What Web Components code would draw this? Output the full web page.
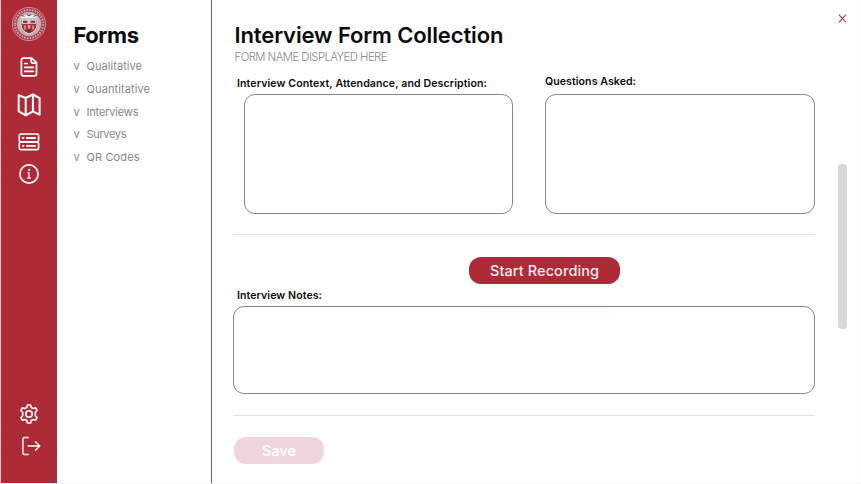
<!DOCTYPE html>
<html lang="en"><head><meta charset="utf-8"><title>Interview Form Collection</title>
<style>
html,body{margin:0;background:#fff}
body{width:861px;height:484px;overflow:hidden;font-family:Inter,"Liberation Sans",sans-serif;color:#0b0b0c}
</style></head><body>
<form-app></form-app>
<script>
const define=(name,html,setup)=>customElements.define(name,class extends HTMLElement{
  constructor(){super();this.attachShadow({mode:'open'}).innerHTML=html;}
  connectedCallback(){if(setup)setup(this,this.shadowRoot);}
});

/* Single line of text, tracked so that it spans the given measure */
define('fit-text',`<style>:host{display:block;white-space:pre;line-height:inherit}span{display:inline-block}</style><span></span>`,(el,root)=>{
  const s=root.querySelector('span'),t=el.getAttribute('text'),w=+el.getAttribute('measure');
  s.textContent=t;
  const natural=s.getBoundingClientRect().width;
  s.style.letterSpacing=((w-natural)/(t.length-1))+'px';
  s.style.marginRight=(-(w-natural)/(t.length-1))+'px';
});

const icons={
seal:`<svg width="36" height="36" viewBox="0 0 36 36"><defs><path id="r" d="M18 18m-13.2 0a13.2 13.2 0 1 1 26.4 0a13.2 13.2 0 1 1 -26.4 0"/></defs>
<circle cx="18" cy="18" r="16.6" fill="#b23a47" stroke="#b9969d" stroke-width="1"/>
<use href="#r" transform="translate(-1.260 -1.260) scale(1.070)" fill="none" stroke="#d6a0a7" stroke-width="2" stroke-dasharray="1.4 1.2"/>
<circle cx="18" cy="18" r="11.8" fill="#b5b3b8" stroke="#cfc5c9" stroke-width=".7"/>
<path d="M9.500 11q3.500-3.200 8.500-1 5-2.200 8.500 1l-2.500 1.300q-3-1.300-6 .2-3-1.500-6-.2z" fill="#f2f2f2"/>
<path d="M10.500 9.500l3 .8M16 8.500l2 1.500 2-1.500M22.500 10.300l3-.8" stroke="#4c4347" stroke-width="1" fill="none"/>
<path d="M10 13.300h16v5.200q-.2 6.800-8 9.500-7.800-2.700-8-9.500z" fill="#b52b39" stroke="#f0e5e7" stroke-width=".9"/>
<path d="M10.900 13.800h14.200v4H10.900z" fill="#ded5d8"/><path d="M12 15.700h4.500M19.500 15.700H24" stroke="#493c40" stroke-width="2"/>
<path d="M14 19.500v4M22 19.500v4M16.500 20h3M18 20v3" stroke="#f0dfe2" stroke-width="1"/><path d="M16 23.300h4l-.6 3.200h-2.800z" fill="#49383d"/></svg>`,
doc:`<svg width="20" height="20" viewBox="0 0 20 20" fill="none" stroke="#fff" stroke-width="1.700" stroke-linejoin="round" stroke-linecap="round"><path d="M4.500 1.200h8.300l4.700 4.500v11q0 2.100-2.100 2.100H4.500q-2.100 0-2.100-2.100V3.300q0-2.100 2.100-2.100z"/><path d="M12.200 1.500v3.200q0 1.500 1.500 1.500h3.500M5.700 6.500h2.600M5.700 10.300h8.600M5.700 14.300h8.600"/></svg>`,
map:`<svg width="24" height="24" viewBox="0 0 24 24" fill="none" stroke="#fff" stroke-width="2" stroke-linejoin="round"><path d="M1.700 2.200L8.700 5l7.200-3.500 6.700 3.700v16.500l-6.700-3.400-7.200 4-7-4zM8.700 5v17.300M15.900 1.500v16.800"/></svg>`,
server:`<svg width="22" height="18" viewBox="0 0 22 18" fill="none" stroke="#fff" stroke-width="1.600"><rect x="1.300" y="1" width="19.300" height="7.900" rx="1.500"/><rect x="1.300" y="8.900" width="19.300" height="7.700" rx="1.500"/><path d="M4.200 5h2M8.200 5h9.500M4.200 12.800h2M8.200 12.800h9.500" stroke-width="1.800"/></svg>`,
info:`<svg width="20" height="20" viewBox="0 0 20 20" fill="none" stroke="#fff"><circle cx="10" cy="10" r="9.100" stroke-width="1.600"/><path d="M8.600 8.800H10v5.300M8.200 14.100h3.700" stroke-width="1.200"/><circle cx="10" cy="6" r="1" fill="#fff" stroke="none"/></svg>`,
gear:`<svg width="20" height="20" viewBox="0 0 20 20" fill="none" stroke="#fff" stroke-width="1.600" stroke-linejoin="round"><circle cx="10" cy="10" r="3.200"/><path d="M8.400 1h3.200l.6 2.500 1.800 1 2.500-.8 1.600 2.800-1.800 1.800v3.400l1.800 1.800-1.600 2.800-2.500-.8-1.800 1-.6 2.500H8.400l-.6-2.500-1.800-1-2.500.8-1.600-2.800 1.800-1.800V8.300L1.900 6.500l1.600-2.800 2.500.8 1.800-1z"/></svg>`,
exit:`<svg width="20" height="20" viewBox="0 0 20 20" fill="none" stroke="#fff" stroke-width="1.400" stroke-linecap="round" stroke-linejoin="round"><path d="M7.200 1.500H3.700Q1.900 1.500 1.900 3.300v13.400q0 1.800 1.800 1.800h3.500M7.200 10h11.600M14.500 5.700L18.800 10l-4.300 4.300"/></svg>`,
close:`<svg width="9" height="9" viewBox="0 0 9 9" stroke="#bd3b49" stroke-width="1.200"><path d="M.9.700l7.200 7.600M8.100.700L.9 8.300"/></svg>`
};
define('ui-icon','<style>:host,svg{display:block}</style><div></div>',(el,r)=>r.querySelector('div').innerHTML=icons[el.getAttribute('name')]);

define('nav-rail',`<style>:host{display:flex;flex-direction:column;align-items:center;box-sizing:border-box;width:56px;height:483px;padding:6px 1px 27px 0;background:#ad2b37}
.doc{margin-top:15px}.map{margin-top:16px}.server{margin-top:16px}.info{margin-top:13px}.gear{margin-top:auto}.exit{margin:12px 0 0 4px}</style>
<ui-icon name="seal"></ui-icon><ui-icon class="doc" name="doc"></ui-icon><ui-icon class="map" name="map"></ui-icon><ui-icon class="server" name="server"></ui-icon><ui-icon class="info" name="info"></ui-icon><ui-icon class="gear" name="gear"></ui-icon><ui-icon class="exit" name="exit"></ui-icon>`);

define('nav-entry',`<style>:host{display:flex;gap:7px;height:22.8px;line-height:22.8px;font-size:11px;color:#85878a;font-weight:400}i{font-style:normal;width:6px}</style><i>v</i><slot></slot>`);

define('forms-menu',`<style>:host{display:block;box-sizing:border-box;width:155px;height:483px;padding:20px 0 0 16.500px;border-right:1px solid #606163}
h2{margin:0 0 5px;font-size:22px;line-height:30px;font-weight:700}</style>
<h2><fit-text text="Forms" measure="65.500"></fit-text></h2>
<nav-entry><fit-text text="Qualitative" measure="55.500"></fit-text></nav-entry>
<nav-entry><fit-text text="Quantitative" measure="63.500"></fit-text></nav-entry>
<nav-entry><fit-text text="Interviews" measure="52"></fit-text></nav-entry>
<nav-entry><fit-text text="Surveys" measure="40"></fit-text></nav-entry>
<nav-entry><fit-text text="QR Codes" measure="53"></fit-text></nav-entry>`);

define('text-field',`<style>:host{display:flex;flex-direction:column}
.label{flex:none;font-size:10.600px;font-weight:600;line-height:14px;padding-left:var(--label-inset,0)}
.box{flex:none;box-sizing:border-box;margin:var(--box-top,5px) 0 0 var(--box-inset,0);height:var(--box-height,120px);border:1px solid #858688;border-radius:11px;background:transparent}</style>
<div class="label"><slot></slot></div><div class="box"></div>`);

define('pill-button',`<style>:host{display:flex;align-items:center;justify-content:center;height:27px;border-radius:12px;background:#ad2b37;color:#f8ecee;font-size:14.500px;font-weight:500;line-height:20px}</style><slot></slot>`);

define('form-panel',`<style>
:host{display:block;flex:none;box-sizing:border-box;width:603px;height:483px;padding:20px 0 0 21px}
h1{margin:0 0 0 1.500px;font-size:22px;line-height:30px;font-weight:600}
.sub{margin-left:1.500px;font-size:11.300px;line-height:15px;color:#85878a;font-weight:350}
.row{display:flex;justify-content:space-between;margin-top:12px;height:137px}
.first{width:280px;--label-inset:4px;--box-inset:11px;--box-top:3px}
.second{width:270px;margin-top:-2px;--box-top:5px}
hr{margin:20px 0 0;border:0;height:1px;background:#e1e1e2}
.record{width:151px;margin:22px 0 0 236px;box-shadow:0 42px 10px -5px #00000003}
.notes{margin-top:5px;--label-inset:4px;--box-height:88px;--box-top:3px}
.notes+hr{margin-top:21px}
.save{width:90px;margin:21px 0 0 1px;background:#efd6da;color:#fff}
</style>
<h1><fit-text text="Interview Form Collection" measure="269"></fit-text></h1>
<div class="sub"><fit-text text="FORM NAME DISPLAYED HERE" measure="153"></fit-text></div>
<div class="row"><text-field class="first"><fit-text text="Interview Context, Attendance, and Description:" measure="250"></fit-text></text-field>
<text-field class="second"><fit-text text="Questions Asked:" measure="91"></fit-text></text-field></div>
<hr><pill-button class="record"><fit-text text="Start Recording" measure="109"></fit-text></pill-button>
<text-field class="notes"><fit-text text="Interview Notes:" measure="85"></fit-text></text-field>
<hr><pill-button class="save"><fit-text text="Save" measure="34"></fit-text></pill-button>`);
define('side-controls',`<style>:host{display:flex;flex-direction:column;align-items:center;width:9px;padding:14px 0 0 23px}.bar{width:9px;height:165px;margin-top:141px;border-radius:4px;background:#d8d8d8}</style><ui-icon name="close"></ui-icon><div class="bar"></div>`);
define('form-app',`<style>:host{display:flex;box-sizing:border-box;width:861px;height:484px;border-left:1px solid #dfc3c8;border-bottom:1px solid #f4f4f4;border-right:1px solid #fafafa}nav-rail,forms-menu{flex:none}</style><nav-rail></nav-rail><forms-menu></forms-menu><form-panel></form-panel><side-controls></side-controls>`);
</script></body></html>
